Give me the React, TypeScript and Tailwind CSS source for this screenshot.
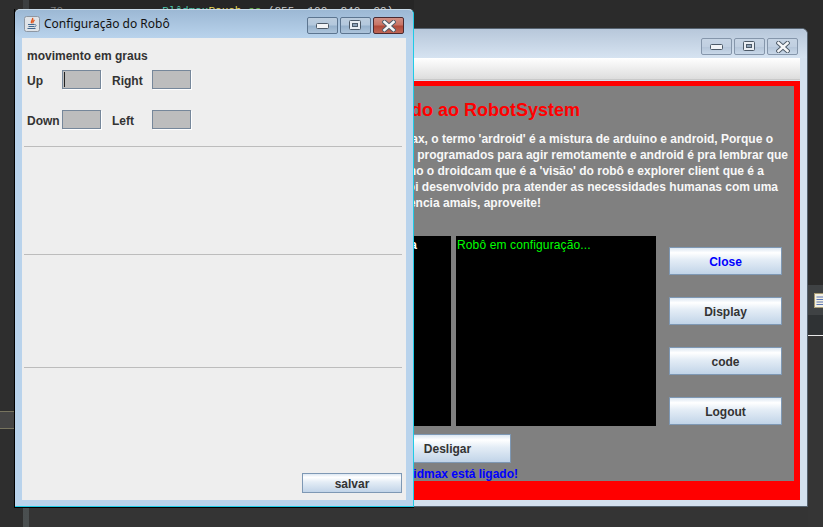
const sans = "font-['Liberation_Sans',Arial,sans-serif]";

function MinIcon() {
  return (
    <svg width="14" height="8" viewBox="0 0 14 8" className="shrink-0">
      <rect x="0.5" y="1.5" width="12" height="5" rx="1" fill="#f2f4f7" stroke="#4d5a68" />
    </svg>
  );
}
function MaxIcon() {
  return (
    <svg width="13" height="11" viewBox="0 0 13 11" className="shrink-0">
      <rect x="0.5" y="0.5" width="11" height="9" rx="1" fill="#e9edf2" stroke="#4d5a68" />
      <rect x="3.5" y="3.5" width="5" height="3" fill="#8ea2b7" stroke="#4d5a68" />
    </svg>
  );
}
function CloseIcon() {
  return (
    <svg width="14" height="12" viewBox="0 0 14 12" className="shrink-0">
      <path d="M2.5 2 L11.5 10 M11.5 2 L2.5 10" stroke="#4d5a68" strokeWidth="4.4" strokeLinecap="square" />
      <path d="M2.5 2 L11.5 10 M11.5 2 L2.5 10" stroke="#f5f6f8" strokeWidth="2.6" strokeLinecap="square" />
    </svg>
  );
}
function WinButton({ kind, active }: { kind: "min" | "max" | "close"; active: boolean }) {
  const tone =
    kind === "close" && active
      ? "border-[#4a2a30] bg-[linear-gradient(#d08f84_0%,#c87466_45%,#b04a3a_55%,#bf6656_100%)]"
      : active
        ? "border-[#5c7590] bg-[linear-gradient(#bccdde_0%,#b3c8dd_45%,#97b2cc_55%,#adc4db_100%)]"
        : "border-[#8596ab] bg-[linear-gradient(#c6d4e4_0%,#c0cfe1_50%,#b5c6da_55%,#c8d7e8_100%)]";
  return (
    <div className={`flex h-[17px] w-[31px] items-center justify-center rounded-[2px] border ${tone}`}>
      {kind === "min" ? <MinIcon /> : kind === "max" ? <MaxIcon /> : <CloseIcon />}
    </div>
  );
}

function JavaIcon() {
  return (
    <svg width="16" height="16" viewBox="0 0 16 16" className="shrink-0">
      <rect x="0.5" y="0.5" width="15" height="15" rx="2" fill="#dfe3e8" stroke="#8d97a3" />
      <path d="M8.6 2 C10 4 6.5 5 7.6 7.2 C6 5.5 9 4.2 8.6 2 Z M10.5 4 C9.5 5.2 8.4 5.6 9 7.4" fill="none" stroke="#e2571e" strokeWidth="1.2" />
      <path d="M4 8.5 H10.5 M4.5 10.5 H10 M3.5 12.5 H11.5" stroke="#44688f" strokeWidth="1" />
      <path d="M10.5 8.5 C13 8.5 12.5 11 10 10.8" fill="none" stroke="#44688f" strokeWidth="0.8" />
    </svg>
  );
}

function DocIcon() {
  return (
    <svg width="15" height="15" viewBox="0 0 15 15" className="shrink-0">
      <rect x="0.5" y="0.5" width="14" height="14" fill="#f3efe0" stroke="#a89b74" />
      <path d="M2.5 4 H12 M2.5 6.5 H12 M2.5 9 H12 M2.5 11.5 H12" stroke="#5a76b8" strokeWidth="1.2" />
    </svg>
  );
}

function MetalButton({ label, className, textClass }: { label: string; className: string; textClass?: string }) {
  return (
    <div
      className={`flex items-center justify-center border border-[#7e98b4] bg-[linear-gradient(#dce7f2_0%,#ffffff_18%,#e4edf6_45%,#c1d4e8_100%)] pt-[1px] text-xs font-bold ${textClass ?? "text-[#333333]"} ${className}`}
    >
      {label}
    </div>
  );
}

function Field({ caret }: { caret?: boolean }) {
  return (
    <div className="h-[19px] w-[39px] border border-[#76879a] bg-[#bdbdbd] pt-[1px] pl-[1px] shadow-[1px_1px_0_#ffffff]">
      {caret && <div className="h-[15px] w-px bg-[#222222]" />}
    </div>
  );
}

function Label({ text, w }: { text: string; w: string }) {
  return <div className={`pt-[2px] text-xs font-bold text-[#333333] ${w}`}>{text}</div>;
}

function Sep({ mt }: { mt: string }) {
  return <div className={`mr-[4px] ml-[2px] h-px bg-[#bcbcbc] ${mt}`} />;
}

export default function App() {
  return (
    <div className={`relative flex h-[527px] w-[823px] overflow-hidden bg-[#2b2b2b] ${sans}`}>
      {/* IDE behind the windows */}
      <div className="flex w-[23px] flex-col bg-[#2e2e2e]">
        <div className="mt-[411px] h-[18px] w-[14px] border-y border-[#77745f] bg-[#444444]" />
      </div>
      <div className="w-[6px] bg-[linear-gradient(#3c3f41_0%,#4a4f50_100%)]" />
      <div className="flex flex-1 flex-col">
        <div className="h-[335px] bg-[#2b2b2b]">
          <div className="h-[9px] w-[385px] overflow-hidden bg-[#262626] pl-[21px] font-['Liberation_Mono',monospace] text-[11px] leading-[15px] whitespace-pre">
            <div className="mt-[-12px] text-[#d8d8d8]">
              <span>{"            "}</span>
              <span className="text-[#6aa8e8]">|</span>
              <span>{"                           "}</span>
              <span>( )</span>
            </div>
            <div className="mt-[1px]">
              <span className="text-[#777777]">70</span>
              <span>{"               "}</span>
              <span className="text-[#4ec9b0]">Blôdmax</span>
              <span className="text-[#e6d85a]">Pouch</span>
              <span className="text-[#6fbf4f]">.se</span>
              <span className="text-[#c9c9c9]"> (255, 100, 240, 99)</span>
            </div>
          </div>
        </div>
        <div className="flex-1 bg-[#343434]" />
      </div>
      <div className="flex w-[15px] flex-col">
        <div className="h-[285px] bg-[#2b2b2b]" />
        <div className="flex h-[30px] items-center bg-[#3f4244] pl-[6px]">
          <DocIcon />
        </div>
        <div className="h-[20px] bg-[#2f3234]" />
        <div className="h-px bg-[#e8e8e8]" />
        <div className="flex-1 bg-[#353535]" />
      </div>

      {/* Main window, behind */}
      <div className="absolute top-[28px] left-[300px] flex h-[479px] w-[508px] flex-col rounded-tr-[6px] border border-[#55626f] bg-[#d4e1ef]">
        <div className="flex h-[29px] shrink-0 items-start justify-end gap-[2px] rounded-tr-[6px] bg-[linear-gradient(#b7c7da,#d6e3f1)] pt-[9px] pr-[9px]">
          <WinButton kind="min" active={false} />
          <WinButton kind="max" active={false} />
          <WinButton kind="close" active={false} />
        </div>
        <div className="mr-[7px] ml-[6px] h-[22px] shrink-0 border-b border-[#c9c9c9] bg-[linear-gradient(#ffffff,#dddddd)]" />
        <div className="mt-px mr-[7px] mb-[6px] ml-[6px] flex flex-1 flex-col border-[6px] border-t-[5px] border-b-[19px] border-[#ff0000] bg-[#808080]">
          <div className="mt-[13px] mr-[214px] self-end text-lg leading-[22px] font-bold whitespace-nowrap text-[#ff0000]">
            Bem vindo ao RobotSystem
          </div>
          <div className="mt-[10px] flex flex-col items-end text-xs leading-4 font-bold whitespace-nowrap text-[#f8f8f8]">
            <div className="mr-[21px]">Androidmax, o termo 'ardroid' é a mistura de arduino e android, Porque o</div>
            <div className="mr-[6px]">robôs são programados para agir remotamente e android é pra lembrar que</div>
            <div className="mr-[30px]">como o droidcam que é a 'visão' do robô e explorer client que é a</div>
            <div className="mr-[16px]">foi desenvolvido pra atender as necessidades humanas com uma</div>
            <div className="mr-[253px]">experiencia amais, aproveite!</div>
          </div>
          <div className="mt-[25px] mr-[12px] flex h-[190px] justify-end gap-[13px]">
            <div className="flex gap-[5px]">
              <div className="w-[100px] bg-black pt-[1px] pl-[22px] text-xs leading-4 font-bold text-white">Câmera</div>
              <div className="w-[200px] bg-black pt-[1px] pl-px text-xs leading-4 tracking-[0.13px] text-[#00ff00]">Robô em configuração...</div>
            </div>
            <div className="flex w-[113px] flex-col gap-[22px] pt-[11px]">
              <MetalButton label="Close" className="h-[28px]" textClass="text-[#0000ff]" />
              <MetalButton label="Display" className="h-[28px]" />
              <MetalButton label="code" className="h-[28px]" />
              <MetalButton label="Logout" className="h-[28px]" />
            </div>
          </div>
          <MetalButton label="Desligar" className="mt-[8px] mr-[283px] h-[29px] w-[127px] self-end" />
          <div className="mt-[4px] mr-[276px] self-end text-xs leading-[14px] font-bold whitespace-nowrap text-[#0000ff]">
            Androidmax está ligado!
          </div>
        </div>
      </div>

      {/* Configuration dialog, in front */}
      <div className="absolute top-[9px] left-[14px] h-[499px] w-[400px] border-b border-l border-black">
        <div className="flex h-full flex-col rounded-t-[5px] border-t border-r border-b border-[#c9dbe9] border-r-[#1fcbe6] border-b-[#1fcbe6] bg-[#b9d3ec]">
          <div className="flex h-[28px] shrink-0 items-center rounded-t-[5px] bg-[linear-gradient(#9cb8d4,#b9d3ec)] pr-[9px] pl-[9px]">
            <JavaIcon />
            <div className="ml-[4px] font-['Noto_Sans',sans-serif] text-xs text-[#111111]">Configuração do Robô</div>
            <div className="mt-[3px] ml-auto flex gap-[2px]">
              <WinButton kind="min" active />
              <WinButton kind="max" active />
              <WinButton kind="close" active />
            </div>
          </div>
          <div className="mr-[7px] mb-[6px] ml-[7px] flex flex-1 flex-col bg-[#eeeeee]">
            <div className="mt-[11px] ml-[5px] text-xs leading-[14px] font-bold text-[#333333]">movimento em graus</div>
            <div className="mt-[7px] ml-[5px] flex items-center">
              <Label text="Up" w="w-[35px]" />
              <Field caret />
              <Label text="Right" w="ml-[11px] w-[40px]" />
              <Field />
            </div>
            <div className="mt-[21px] ml-[5px] flex items-center">
              <Label text="Down" w="w-[35px]" />
              <Field />
              <Label text="Left" w="ml-[11px] w-[40px]" />
              <Field />
            </div>
            <Sep mt="mt-[17px]" />
            <Sep mt="mt-[107px]" />
            <Sep mt="mt-[112px]" />
            <div className="mt-auto mr-[4px] mb-[7px] flex justify-end">
              <MetalButton label="salvar" className="h-[20px] w-[100px]" />
            </div>
          </div>
        </div>
      </div>
    </div>
  );
}
